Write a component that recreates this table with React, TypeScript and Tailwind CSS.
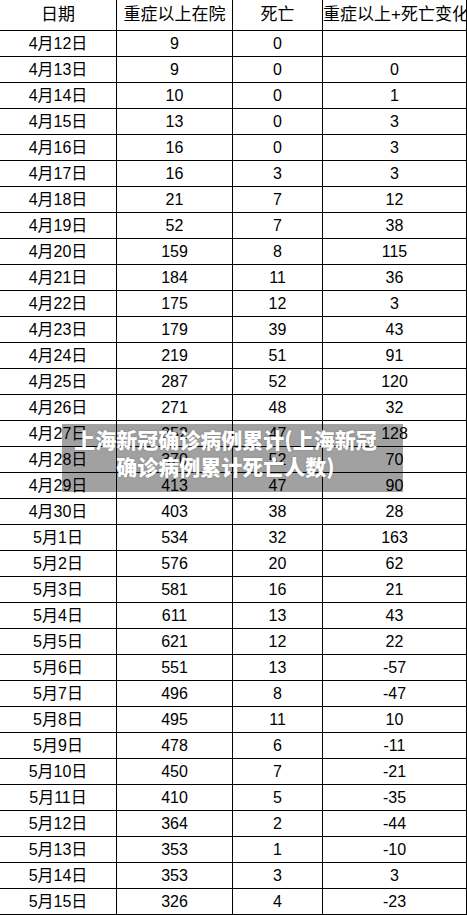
const rows: [string, string, string, string][] = [
  ["4月12日", "9", "0", ""],
  ["4月13日", "9", "0", "0"],
  ["4月14日", "10", "0", "1"],
  ["4月15日", "13", "0", "3"],
  ["4月16日", "16", "0", "3"],
  ["4月17日", "16", "3", "3"],
  ["4月18日", "21", "7", "12"],
  ["4月19日", "52", "7", "38"],
  ["4月20日", "159", "8", "115"],
  ["4月21日", "184", "11", "36"],
  ["4月22日", "175", "12", "3"],
  ["4月23日", "179", "39", "43"],
  ["4月24日", "219", "51", "91"],
  ["4月25日", "287", "52", "120"],
  ["4月26日", "271", "48", "32"],
  ["4月27日", "352", "47", "128"],
  ["4月28日", "370", "52", "70"],
  ["4月29日", "413", "47", "90"],
  ["4月30日", "403", "38", "28"],
  ["5月1日", "534", "32", "163"],
  ["5月2日", "576", "20", "62"],
  ["5月3日", "581", "16", "21"],
  ["5月4日", "611", "13", "43"],
  ["5月5日", "621", "12", "22"],
  ["5月6日", "551", "13", "-57"],
  ["5月7日", "496", "8", "-47"],
  ["5月8日", "495", "11", "10"],
  ["5月9日", "478", "6", "-11"],
  ["5月10日", "450", "7", "-21"],
  ["5月11日", "410", "5", "-35"],
  ["5月12日", "364", "2", "-44"],
  ["5月13日", "353", "1", "-10"],
  ["5月14日", "353", "3", "3"],
  ["5月15日", "326", "4", "-23"],
];

const cell = "flex items-center justify-center border-r border-b border-black overflow-hidden whitespace-nowrap";
const grid = "grid grid-cols-[117px_116px_90px_144px]";

export default function App() {
  return (
    <div className="relative h-[915px] w-[467px] overflow-hidden bg-white text-black font-['Liberation_Sans','Noto_Sans_CJK_SC',sans-serif]">
      <div className={`${grid} h-[31px] text-[17px]`}>
        <div className={cell}>日期</div>
        <div className={cell}>重症以上在院</div>
        <div className={cell}>死亡</div>
        <div className={`${cell} !justify-start`}>重症以上+死亡变化</div>
      </div>

      {rows.map((r) => (
        <div key={r[0]} className={`${grid} h-[26px] text-[16px]`}>
          <div className={cell}>{r[0]}</div>
          <div className={cell}>{r[1]}</div>
          <div className={cell}>{r[2]}</div>
          <div className={cell}>{r[3]}</div>
        </div>
      ))}

      {/* caption overlay */}
      <div className="absolute left-[62px] top-[424px] h-[68px] w-[341px] bg-black/[0.37] pl-[2px] pr-[16px] pt-[2px] text-center whitespace-nowrap text-[21px] font-black leading-[27px] text-white [text-shadow:0_0_2px_rgba(0,0,0,0.25)] font-['Noto_Sans_CJK_SC',sans-serif]">
        上海新冠确诊病例累计(上海新冠
        <br />
        确诊病例累计死亡人数)
      </div>
    </div>
  );
}
